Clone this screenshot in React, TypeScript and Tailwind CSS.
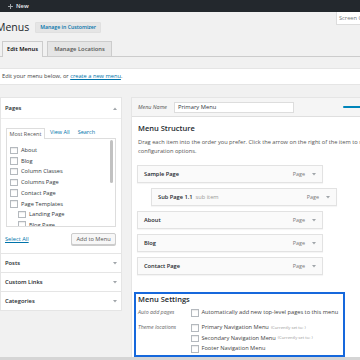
import React from 'react';

function Down() {
  return (
    <svg width="4" height="3" viewBox="0 0 4 3" className="shrink-0">
      <polygon points="0,0 4,0 2,2.6" fill="#a0a5aa" />
    </svg>
  );
}

function Up() {
  return (
    <svg width="4" height="3" viewBox="0 0 4 3" className="shrink-0">
      <polygon points="0,3 4,3 2,0.4" fill="#a0a5aa" />
    </svg>
  );
}

function Box() {
  return <span className="w-[7.5px] h-[7.5px] shrink-0 bg-white border border-[#b4b9be] shadow-[inset_0_1px_1px_rgba(0,0,0,0.08)]" />;
}

const pages = [
  { name: 'About', sub: false },
  { name: 'Blog', sub: false },
  { name: 'Column Classes', sub: false },
  { name: 'Columns Page', sub: false },
  { name: 'Contact Page', sub: false },
  { name: 'Page Templates', sub: false },
  { name: 'Landing Page', sub: true },
  { name: 'Blog Page', sub: true },
];

const items = [
  { title: 'Sample Page', sub: false },
  { title: 'Sub Page 1.1', sub: true },
  { title: 'About', sub: false },
  { title: 'Blog', sub: false },
  { title: 'Contact Page', sub: false },
];

function App() {
  return (
    <div className="w-[360px] h-[360px] overflow-hidden bg-[#f1f1f1] border-b-[3px] border-[#d5d5d5] font-['Open_Sans',sans-serif] text-[5.7px] text-[#444]">
      {/* admin bar */}
      <div className="h-[12px] bg-[#23282d] flex items-center pl-[8px] gap-[3px] text-[#eee] font-semibold text-[5.8px]">
        <svg width="5" height="5" viewBox="0 0 10 10">
          <path d="M4 0h2v4h4v2H6v4H4V6H0V4h4z" fill="#a0a5aa" />
        </svg>
        <span>New</span>
      </div>

      {/* heading row */}
      <div className="flex items-start justify-between">
        <div className="flex items-center gap-[6px] ml-[-4px] mt-[9px]">
          <h1 className="text-[10.5px] leading-[13px] text-[#23282d]">Menus</h1>
          <span className="h-[11px] px-[4px] flex items-center bg-[#e5e5e5] border border-[#e0e0e0] rounded-[1px] text-[#0073aa] font-semibold text-[5.2px]">
            Manage in Customizer
          </span>
        </div>
        <div className="w-[24px] h-[13px] bg-white border-l border-b border-[#ddd] pl-[2px] pt-[2px] text-[5.7px] text-[#72777c] whitespace-nowrap overflow-hidden">
          Screen Options
        </div>
      </div>

      {/* tabs */}
      <div className="mt-[7px] h-[16px] flex items-end gap-[4px] pl-[2px] border-b border-[#ccc]">
        <div className="w-[41px] h-[16px] mb-[-1px] flex items-center justify-center border border-b-0 border-[#ccc] bg-[#f1f1f1] text-[#000] font-semibold text-[5.8px]">
          Edit Menus
        </div>
        <div className="w-[65px] h-[15px] flex items-center justify-center border border-b-0 border-[#ccc] bg-[#e5e5e5] text-[#555] font-semibold text-[5.8px]">
          Manage Locations
        </div>
      </div>

      {/* notice */}
      <div className="mt-[11px] h-[17px] bg-white border-y border-[#e5e5e5] flex items-center pl-[2px] text-[#444]">
        <span>
          Edit your menu below, or <span className="text-[#0073aa] underline">create a new menu</span>.
        </span>
      </div>

      <div className="mt-[12px] flex items-start">
        {/* left column */}
        <div className="w-[122px] shrink-0 bg-white border border-[#e5e5e5]">
          <div className="h-[21px] flex items-center justify-between px-[4px] border-b border-[#eee]">
            <span className="font-semibold text-[#23282d] text-[5.8px]">Pages</span>
            <Up />
          </div>
          <div className="px-[5px] pt-[8px] pb-[8px]">
            <div className="flex items-end h-[11px] text-[5.5px]">
              <div className="w-[39px] h-[11px] mb-[-1px] relative bg-white border border-b-0 border-[#ddd] flex items-center justify-center text-[#555]">
                Most Recent
              </div>
              <span className="ml-[5px] mb-[2px] text-[#0073aa]">View All</span>
              <span className="ml-[8px] mb-[2px] text-[#0073aa]">Search</span>
            </div>
            <div className="h-[89px] border border-[#ddd] flex overflow-hidden">
              <div className="flex-1 pt-[6px] pl-[3px]">
                {pages.map((p) => (
                  <div key={p.name} className={`h-[10.7px] flex items-center gap-[3.5px] text-[#32373c] ${p.sub ? 'ml-[8px]' : ''}`}>
                    <Box />
                    <span>{p.name}</span>
                  </div>
                ))}
              </div>
              <div className="w-[4px] mr-[1px] pt-[1px]">
                <div className="h-[43px] w-[3px] rounded-full bg-[#c1c1c1]" />
              </div>
            </div>
            <div className="mt-[6px] h-[12px] flex items-center justify-between">
              <span className="ml-[-1px] text-[#0073aa] underline">Select All</span>
              <span className="w-[45px] h-[12px] flex items-center justify-center bg-[#f7f7f7] border border-[#ccc] rounded-[2px] shadow-[0_1px_0_#ccc] text-[#555]">
                Add to Menu
              </span>
            </div>
          </div>
          {['Posts', 'Custom Links', 'Categories'].map((s) => (
            <div key={s} className="h-[19px] border-t border-[#e5e5e5] flex items-center justify-between px-[4px]">
              <span className="font-semibold text-[#23282d] text-[5.8px]">{s}</span>
              <Down />
            </div>
          ))}
        </div>

        {/* right column */}
        <div className="ml-[9px] w-[240px] h-[270px] shrink-0 bg-white border-l border-t border-[#e5e5e5]">
          <div className="h-[19px] bg-[#f5f5f5] border-b border-[#dfdfdf] flex items-center pl-[6px]">
            <span className="italic text-[#555] text-[5.4px] w-[36px]">Menu Name</span>
            <span className="w-[120px] h-[11px] bg-white border border-[#ddd] flex items-center pl-[3px] text-[#32373c] text-[5.8px]">
              Primary Menu
            </span>
            <span className="ml-auto mr-[8px] w-[20px] h-[2px] bg-[#0085ba] rounded-full" />
          </div>
          <div className="pl-[5px]">
            <h3 className="pt-[6px] pl-[1px] text-[7.5px] leading-[10px] font-semibold text-[#23282d]">Menu Structure</h3>
            <p className="mt-[5px] pl-[1px] leading-[9px] text-[#555] whitespace-nowrap">
              Drag each item into the order you prefer. Click the arrow on the right of the item to reveal additional
              <br />
              configuration options.
            </p>
            <div className="mt-[9px] flex flex-col gap-[5px]">
              {items.map((it) => (
                <div
                  key={it.title}
                  className={`w-[186px] h-[18px] bg-[#fafafa] border border-[#e2e2e2] shadow-[0_1px_1px_rgba(0,0,0,0.04)] flex items-center pl-[6px] pr-[6px] ${it.sub ? 'ml-[14px]' : ''}`}
                >
                  <span className="font-semibold text-[#23282d]">{it.title}</span>
                  {it.sub && <span className="ml-[3px] text-[#999]">sub item</span>}
                  <span className="ml-auto text-[#777] text-[5.4px]">Page</span>
                  <span className="ml-[7px]">
                    <Down />
                  </span>
                </div>
              ))}
            </div>
          </div>

          {/* menu settings */}
          <div className="mt-[17px] ml-[2px] w-[211px] border-2 border-[#1668dc] pl-[2px] pb-[1px]">
            <h3 className="text-[7.5px] leading-[10px] font-semibold text-[#23282d]">Menu Settings</h3>
            <div className="mt-[3.5px] h-[10.5px] flex items-center">
              <span className="w-[53px] italic text-[#666] text-[5.3px]">Auto add pages</span>
              <Box />
              <span className="ml-[3px] text-[#444]">Automatically add new top-level pages to this menu</span>
            </div>
            <div className="mt-[4.5px] flex">
              <span className="w-[53px] h-[10.5px] flex items-center italic text-[#666] text-[5.3px]">Theme locations</span>
              <div>
                {[
                  ['Primary Navigation Menu', true],
                  ['Secondary Navigation Menu', true],
                  ['Footer Navigation Menu', false],
                ].map(([label, cur]) => (
                  <div key={label as string} className="h-[10.5px] flex items-center">
                    <Box />
                    <span className="ml-[3px] text-[#444]">{label}</span>
                    {cur && <span className="ml-[2px] text-[4.2px] text-[#999]">(Currently set to: )</span>}
                  </div>
                ))}
              </div>
            </div>
          </div>
        </div>
      </div>
    </div>
  );
}

export default App;
